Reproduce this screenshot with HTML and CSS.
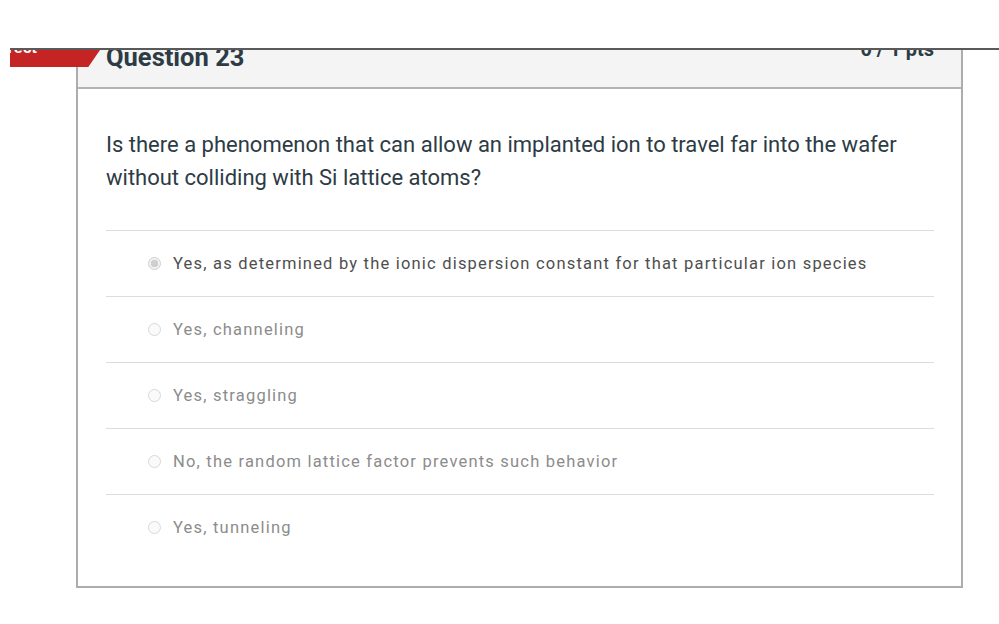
FILE: index.html
```html
<!DOCTYPE html>
<html>
<head>
<meta charset="utf-8">
<link rel="stylesheet" href="styles.css">
</head>
<body>
<div class="stage">
  <div class="badge"><span class="badge-text">Correct</span></div>
  <div class="card">
    <div class="card-header">
      <span class="q-title">Question 23</span>
      <span class="q-pts">0 / 1 pts</span>
    </div>
    <div class="card-body">
      <p class="q-text">Is there a phenomenon that can allow an implanted ion to travel far into the wafer without colliding with Si lattice atoms?</p>
      <div class="answers">
        <div class="answer selected"><span class="radio"></span><span class="a-text">Yes, as determined by the ionic dispersion constant for that particular ion species</span></div>
        <div class="answer"><span class="radio"></span><span class="a-text">Yes, channeling</span></div>
        <div class="answer"><span class="radio"></span><span class="a-text">Yes, straggling</span></div>
        <div class="answer"><span class="radio"></span><span class="a-text">No, the random lattice factor prevents such behavior</span></div>
        <div class="answer"><span class="radio"></span><span class="a-text">Yes, tunneling</span></div>
      </div>
    </div>
  </div>
</div>
</body>
</html>
```
FILE: styles.css
```css
html, body {
  margin: 0;
  padding: 0;
  background: #ffffff;
}
.stage {
  position: relative;
  margin-top: 48px;
  margin-left: 10px;
  border-top: 2px solid #595959;
}
.badge {
  position: absolute;
  left: 0;
  top: 0;
  width: 90px;
  height: 17px;
  background: #c42424;
  clip-path: polygon(0 0, 100% 0, 87% 100%, 0 100%);
  overflow: hidden;
  z-index: 2;
}
.badge-text {
  display: block;
  margin-top: -10px;
  margin-left: -30px;
  font: bold 16px/16px "Liberation Sans", Arial, sans-serif;
  color: #ffffff;
}
.card {
  margin-left: 66px;
  width: 883px;
  border-left: 2px solid #adadad;
  border-right: 2px solid #adadad;
  border-bottom: 2px solid #adadad;
}
.card-header {
  height: 37px;
  background: #f4f4f4;
  border-bottom: 2px solid #b3b3b3;
  overflow: hidden;
  display: flex;
  justify-content: space-between;
  padding: 0 27px 0 28px;
  font-family: Roboto, "Liberation Sans", sans-serif;
  color: #2d3b45;
}
.q-title {
  font-weight: bold;
  font-size: 25.5px;
  line-height: 25px;
  margin-top: -5px;
}
.q-pts {
  font-weight: bold;
  font-size: 20px;
  line-height: 20px;
  margin-top: -11px;
}
.card-body {
  padding: 39px 27px 26px 28px;
}
.q-text {
  margin: 0;
  max-width: 805px;
  font-family: Roboto, sans-serif;
  font-size: 22px;
  line-height: 33px;
  color: #2d3b45;
}
.answers {
  margin-top: 36px;
  border-top: 1px solid #dcdcdc;
}
.answer {
  display: flex;
  align-items: center;
  height: 65px;
  border-bottom: 1px solid #dcdcdc;
  padding-left: 42px;
  font-family: Roboto, sans-serif;
  font-size: 16.5px;
  letter-spacing: 1.2px;
  color: #8c8c8c;
}
.answer:last-child {
  border-bottom: none;
}
.answer.selected {
  color: #4e4e4e;
}
.radio {
  width: 13px;
  height: 13px;
  box-sizing: border-box;
  border-radius: 50%;
  border: 1px solid #d8d8d8;
  background: #fafafa;
  margin-right: 12px;
  flex: none;
}
.answer.selected .radio {
  background: radial-gradient(circle, #cfcfcf 0 3.5px, #f2f2f2 4px);
  border-color: #d0d0d0;
}
```
